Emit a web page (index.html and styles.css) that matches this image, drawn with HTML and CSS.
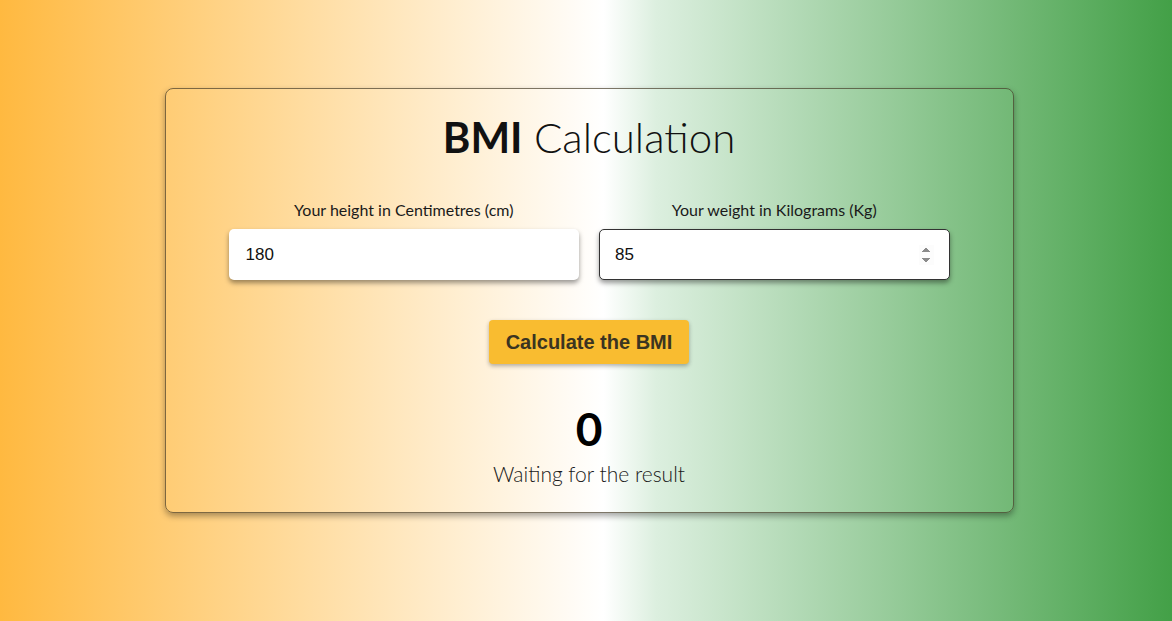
FILE: index.html
```html
<!DOCTYPE html>
<html lang="en">
<head>
<meta charset="utf-8">
<title>BMI Calculation</title>
<link rel="stylesheet" href="styles.css">
</head>
<body>
<main class="page">
  <section class="card">
    <h1 class="title"><strong>BMI</strong> Calculation</h1>
    <div class="fields">
      <div class="field">
        <label class="label" for="height">Your height in Centimetres (cm)</label>
        <input class="input" id="height" type="number" value="180">
      </div>
      <div class="field">
        <label class="label" for="weight">Your weight in Kilograms (Kg)</label>
        <input class="input input-focus" id="weight" type="number" value="85" autofocus>
      </div>
    </div>
    <button class="btn" type="button">Calculate the BMI</button>
    <div class="result">0</div>
    <p class="status">Waiting for the result</p>
  </section>
</main>
</body>
</html>
```
FILE: styles.css
```css
html, body {
  margin: 0;
  height: 100%;
}
body {
  background: linear-gradient(to right, #ffb940 0%, #ffffff 51.5%, #dcefdf 56%, #43a047 100%);
  font-family: Lato, "Noto Sans", sans-serif;
  color: #111;
}
.page {
  display: flex;
  justify-content: center;
  padding: 88px 0 0 6px;
}
.card {
  width: 849px;
  box-sizing: border-box;
  border: 1px solid rgba(70, 60, 40, 0.7);
  border-radius: 8px;
  box-shadow: 0 3px 6px rgba(0, 0, 0, 0.35);
  padding: 22px 63px 25px;
  text-align: center;
}
.title {
  margin: 0;
  font-size: 42px;
  line-height: 52px;
  font-weight: 300;
  color: #111;
}
.title strong {
  font-weight: 700;
}
.fields {
  display: grid;
  grid-template-columns: 1fr 1fr;
  gap: 20px;
  margin-top: 38px;
}
.field {
  display: flex;
  flex-direction: column;
  align-items: stretch;
}
.label {
  font-size: 16px;
  line-height: 18px;
  color: #1a1a1a;
  margin-bottom: 10px;
}
.input {
  height: 51px;
  box-sizing: border-box;
  border: 1px solid transparent;
  border-radius: 5px;
  background: #fff;
  padding: 0 15px 0 16px;
  font-family: Arial, "Liberation Sans", sans-serif;
  font-size: 17px;
  color: #111;
  box-shadow: 0 3px 5px rgba(0, 0, 0, 0.4);
  outline: none;
}
.input-focus {
  border-color: #333;
  padding-left: 15px;
}
.btn {
  margin-top: 40px;
  width: 200px;
  height: 44px;
  border: none;
  border-radius: 4px;
  background: #f9bc30;
  color: #3b3421;
  font-family: Arial, "Liberation Sans", sans-serif;
  font-weight: 700;
  font-size: 20px;
  box-shadow: 0 2px 4px rgba(0, 0, 0, 0.3);
  cursor: pointer;
}
.result {
  margin-top: 40px;
  font-size: 46px;
  line-height: 50px;
  font-weight: 700;
  color: #000;
}
.status {
  margin: 7px 0 0;
  font-size: 21px;
  line-height: 26px;
  font-weight: 300;
  color: #1a1a1a;
}
```
